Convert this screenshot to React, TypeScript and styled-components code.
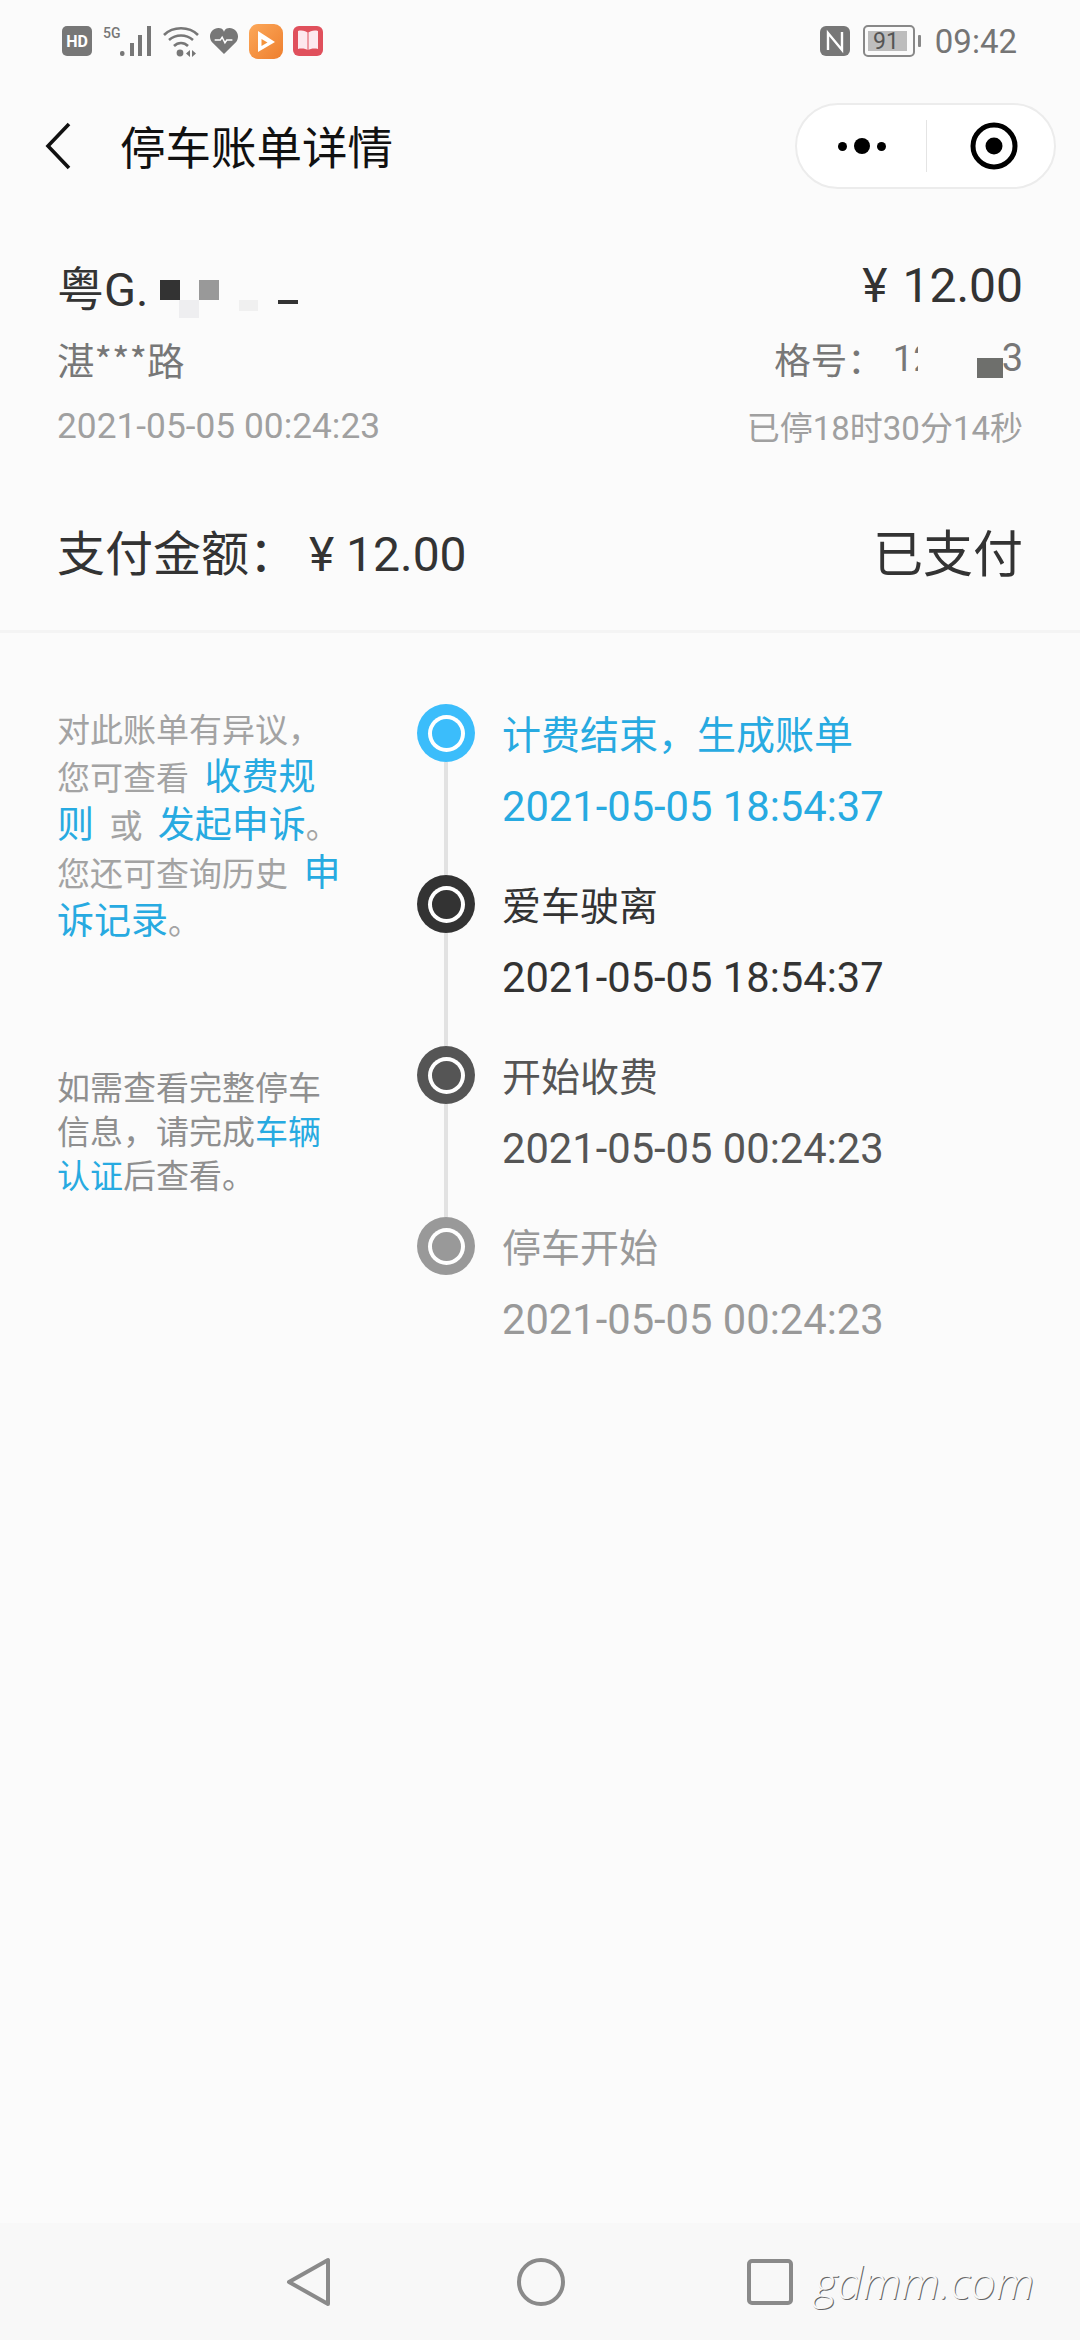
import React from "react";
import styled, { createGlobalStyle } from "styled-components";

const Global = createGlobalStyle`
  html, body { margin: 0; padding: 0; background: #fbfbfb; }
  body { font-family: "Noto Sans CJK SC", "Roboto", sans-serif; }
  * { box-sizing: border-box; }
`;
const SANS = `"Roboto", "Noto Sans CJK SC", sans-serif`;
const Page = styled.div`
  width: 1080px; height: 2340px; background: #fbfbfb; display: flex; flex-direction: column; overflow: hidden;
`;
const StatusBar = styled.div`
  height: 82px; padding: 0 63px 0 62px; display: flex; justify-content: space-between; align-items: center;
`;
const StatusGroup = styled.div`display: flex; align-items: center; gap: 10px;`;
const Clock = styled.span`font: 33px ${SANS}; color: #757575; margin-left: 4px;`;
const Header = styled.div`
  height: 128px; padding: 0 24px 0 45px; display: flex; align-items: center;
`;
const Title = styled.div`font-size: 45.5px; color: #111; margin-left: 49px; flex: 1; line-height: 1;`;
const Capsule = styled.div`
  width: 261px; height: 86px; background: #fff; border: 2px solid #ececec; border-radius: 43px; display: flex; align-items: center;
`;
const CapLeft = styled.div`width: 130px; height: 52px; border-right: 1px solid #e4e4e4; display: flex; align-items: center; justify-content: center; gap: 7px;`;
const Dot = styled.i<{ $s: number }>`width: ${p => p.$s}px; height: ${p => p.$s}px; background: #000; border-radius: 50%; display: block;`;
const CapRight = styled.div`flex: 1; display: flex; justify-content: center; padding-left: 6px;`;
const Info = styled.div`padding: 0 57px 0 57px; margin-top: 40px; display: flex; flex-direction: column;`;
const InfoRow = styled.div<{ $h: number }>`display: flex; justify-content: space-between; align-items: center; height: ${p => p.$h}px;`;
const Plate = styled.div`position: relative; font: 47px ${SANS}; color: #333; width: 240px;`;
const Price = styled.div`font: 48px ${SANS}; color: #333; word-spacing: 3px;`;
const Street = styled.div`font-size: 37.5px; color: #777;`;
const Bay = styled.div`position: relative; font-size: 36.5px; color: #777; white-space: nowrap; display: flex; align-items: center;`;
const BayDigits = styled.span`font-family: "Roboto", sans-serif; margin-left: 9px; width: 33px;`;
const BayGap = styled.span`width: 76px; display: block;`;
const BayEnd = styled.span`font: 38px "Roboto", sans-serif;`;
const Muted = styled.div`font: 35.3px ${SANS}; color: #a0a0a0;`;
const MutedSmall = styled.div`font: 33px ${SANS}; color: #a0a0a0;`;
const Block = styled.i<{ $x: number; $y: number; $w: number; $h: number; $c: string }>`
  position: absolute; left: ${p => p.$x}px; top: ${p => p.$y}px; width: ${p => p.$w}px; height: ${p => p.$h}px; background: ${p => p.$c};
`;
const PayRow = styled.div`
  height: 161px; margin-top: 16px; padding: 0 57px 3px 57px; display: flex; justify-content: space-between; align-items: center; border-bottom: 3px solid #f4f4f4;
`;
const PayLabel = styled.div`font: 48px ${SANS}; color: #333;`;
const PayState = styled.div`font-size: 50px; color: #333; line-height: 1;`;
const Main = styled.div`display: flex; padding: 71px 0 0 57px; flex: 1;`;
const Side = styled.div`width: 360px; display: flex; flex-direction: column; gap: 120px;`;
const Note = styled.p`margin: 0; font-size: 33px; line-height: 48px; color: #a3a3a3; word-spacing: 8px;`;
const LooseNote = styled.p`margin: 0; font-size: 33px; line-height: 44px; color: #8f8f8f;`;
const Lnk = styled.span`display: inline-block; color: #27aae1; font-size: 37px; line-height: 1;`;
const PlainLnk = styled.span`color: #27aae1;`;
const Timeline = styled.div`display: flex; flex-direction: column;`;
const Step = styled.div`position: relative; height: 171px; display: flex; gap: 27px;`;
const Ring = styled.div<{ $c: string }>`
  width: 58px; height: 58px; border-radius: 50%; background: ${p => p.$c}; flex: none; display: flex; align-items: center; justify-content: center;
  &::after { content: ""; width: 29px; height: 29px; border-radius: 50%; background: ${p => p.$c}; box-shadow: 0 0 0 4px #fff; }
`;
const Rail = styled.i`position: absolute; left: 27px; top: 58px; bottom: 0; width: 4px; background: #e2e2e2;`;
const StepText = styled.div<{ $c: string }>`color: ${p => p.$c}; display: flex; flex-direction: column; gap: 29px; padding-top: 5px;`;
const StepTitle = styled.div`font-size: 39px; line-height: 46px;`;
const StepTime = styled.div`font: 41.7px/46px ${SANS};`;
const NavBar = styled.div`
  height: 117px; background: #f8f8f8; display: flex; align-items: center; padding-left: 286px;
`;
const NavSlot = styled.div<{ $w: number }>`width: ${p => p.$w}px; display: flex;`;
const Watermark = styled.span`
  font: italic 300 45px "Open Sans", sans-serif; color: #f8f8f8; text-shadow: 1px 1px 0 #666; margin-left: 21px;
`;

const steps = [
  { c: "#3bbdfb", t: "#27aae1", title: "计费结束，生成账单", time: "2021-05-05 18:54:37" },
  { c: "#333333", t: "#333333", title: "爱车驶离", time: "2021-05-05 18:54:37" },
  { c: "#555555", t: "#555555", title: "开始收费", time: "2021-05-05 00:24:23" },
  { c: "#999999", t: "#999999", title: "停车开始", time: "2021-05-05 00:24:23" },
];

export default function App() {
  return (
    <Page>
      <Global />
      <StatusBar>
        <StatusGroup>
          <svg width="30" height="30" viewBox="0 0 30 30"><rect width="30" height="30" rx="5" fill="#777" /><text x="15" y="21" textAnchor="middle" fontSize="16" fontWeight="700" fontFamily="Roboto" fill="#fff">HD</text></svg>
          <svg width="50" height="32" viewBox="0 0 50 32" style={{ marginLeft: 1 }}><text x="0" y="13" fontSize="14" fontWeight="500" fontFamily="Roboto" fill="#777">5G</text><rect x="17" y="26" width="4.5" height="5" rx="2" fill="#777" /><rect x="27" y="18" width="4" height="13" fill="#777" /><rect x="35" y="10" width="4" height="21" fill="#777" /><rect x="44" y="1" width="4" height="30" fill="#777" /></svg>
          <svg width="36" height="32" viewBox="0 0 36 32" fill="none" stroke="#777" strokeWidth="2.6"><path d="M1 10C10 1 26 1 35 10M6 15c7-6 17-6 24 0M11 21c4-4 10-4 14 0" /><circle cx="17" cy="28" r="3.4" fill="#777" stroke="none" /><path d="M27 25l-4 3.5 4 3.5zM29 25l4 3.5-4 3.5z" fill="#777" stroke="none" /></svg>
          <svg width="30" height="28" viewBox="0 0 32 30"><path d="M16 29L3 16C-2 9 3 1 10 1c3 0 5 1 6 4 1-3 3-4 6-4 7 0 12 8 7 15z" fill="#777" /><path d="M6 14h6l2-3 3 6 2-3h6" fill="none" stroke="#fff" strokeWidth="1.6" /></svg>
          <svg width="34" height="35" viewBox="0 0 34 35"><defs><linearGradient id="og" x1="0" y1="0" x2="1" y2="1"><stop offset="0" stopColor="#fca85a" /><stop offset="1" stopColor="#ee7f2e" /></linearGradient></defs><rect width="34" height="35" rx="9" fill="url(#og)" /><path d="M9 7l17 11L9 28z" fill="#fff" /><path d="M12.5 15l6 3.5-6 3.5z" fill="#f4933c" /></svg>
          <svg width="30" height="30" viewBox="0 0 30 30"><rect width="30" height="30" rx="6" fill="#e0505c" /><path d="M5 5c4-1 8 0 10 2 2-2 6-3 10-2v18c-4-1-8 0-10 1-2-1-6-2-10-1z" fill="#fde8ee" /><path d="M15 7v17" stroke="#e0505c" strokeWidth="1" /></svg>
        </StatusGroup>
        <StatusGroup>
          <svg width="30" height="30" viewBox="0 0 30 30"><rect width="30" height="30" rx="6" fill="#777" /><path d="M8 24V7l14 17V6" fill="none" stroke="#fff" strokeWidth="2.4" /></svg>
          <svg width="58" height="32" viewBox="0 0 58 32" style={{ marginLeft: 3 }}><rect x="1" y="1" width="50" height="30" rx="4" fill="none" stroke="#888" strokeWidth="2" /><rect x="5" y="6" width="39" height="20" fill="#bdbdbd" /><text x="23" y="24" textAnchor="middle" fontSize="23" fontFamily="Roboto" fill="#555">91</text><rect x="55" y="10" width="3" height="12" rx="1" fill="#888" /></svg>
          <Clock>09:42</Clock>
        </StatusGroup>
      </StatusBar>
      <Header>
        <svg width="26" height="48" viewBox="0 0 26 48" fill="none" stroke="#111" strokeWidth="3.6"><path d="M24 2L3 24l21 22" /></svg>
        <Title>停车账单详情</Title>
        <Capsule>
          <CapLeft><Dot $s={9} /><Dot $s={16} /><Dot $s={9} /></CapLeft>
          <CapRight>
            <svg width="48" height="48" viewBox="0 0 48 48"><circle cx="24" cy="24" r="21" fill="none" stroke="#000" strokeWidth="5" /><circle cx="24" cy="24" r="8.5" fill="#000" /></svg>
          </CapRight>
        </Capsule>
      </Header>
      <Info>
        <InfoRow $h={70}>
          <Plate>粤G.<Block $x={103} $y={29} $w={20} $h={20} $c="#333" /><Block $x={142} $y={29} $w={20} $h={20} $c="#999" /><Block $x={122} $y={49} $w={20} $h={18} $c="#eeeef0" /><Block $x={182} $y={49} $w={19} $h={11} $c="#f0f0f0" /><Block $x={221} $y={49} $w={20} $h={4} $c="#333" /></Plate>
          <Price>¥ 12.00</Price>
        </InfoRow>
        <InfoRow $h={76}>
          <Street>湛***路</Street>
          <Bay>
            格号：<BayDigits>12</BayDigits><BayGap /><BayEnd>3</BayEnd>
            <Block $x={144} $y={4} $w={34} $h={44} $c="#fbfbfb" />
            <Block $x={203} $y={26} $w={26} $h={20} $c="#6e6f6c" />
          </Bay>
        </InfoRow>
        <InfoRow $h={60}>
          <Muted>2021-05-05 00:24:23</Muted>
          <MutedSmall>已停18时30分14秒</MutedSmall>
        </InfoRow>
      </Info>
      <PayRow>
        <PayLabel>支付金额： ¥ 12.00</PayLabel>
        <PayState>已支付</PayState>
      </PayRow>
      <Main>
        <Side>
          <Note>对此账单有异议，<br />您可查看 <Lnk>收费规</Lnk><br /><Lnk>则</Lnk> 或 <Lnk>发起申诉</Lnk>。<br />您还可查询历史 <Lnk>申</Lnk><br /><Lnk>诉记录</Lnk>。</Note>
          <LooseNote>如需查看完整停车<br />信息，请完成<PlainLnk>车辆<br />认证</PlainLnk>后查看。</LooseNote>
        </Side>
        <Timeline>
          {steps.map((s, i) => (
            <Step key={i}>
              <Ring $c={s.c} />
              {i < 3 && <Rail />}
              <StepText $c={s.t}>
                <StepTitle>{s.title}</StepTitle>
                <StepTime>{s.time}</StepTime>
              </StepText>
            </Step>
          ))}
        </Timeline>
      </Main>
      <NavBar>
        <NavSlot $w={230}><svg width="46" height="50" viewBox="0 0 46 50" fill="none" stroke="#8a8a8a" strokeWidth="4" strokeLinejoin="round"><path d="M42 3v44L3 25z" /></svg></NavSlot>
        <NavSlot $w={231}><svg width="50" height="50" viewBox="0 0 50 50" fill="none" stroke="#8a8a8a" strokeWidth="4"><circle cx="25" cy="25" r="22" /></svg></NavSlot>
        <svg width="46" height="46" viewBox="0 0 46 46" fill="none" stroke="#8a8a8a" strokeWidth="4"><rect x="2" y="2" width="42" height="42" rx="3" /></svg>
        <Watermark>gdmm.com</Watermark>
      </NavBar>
    </Page>
  );
}
